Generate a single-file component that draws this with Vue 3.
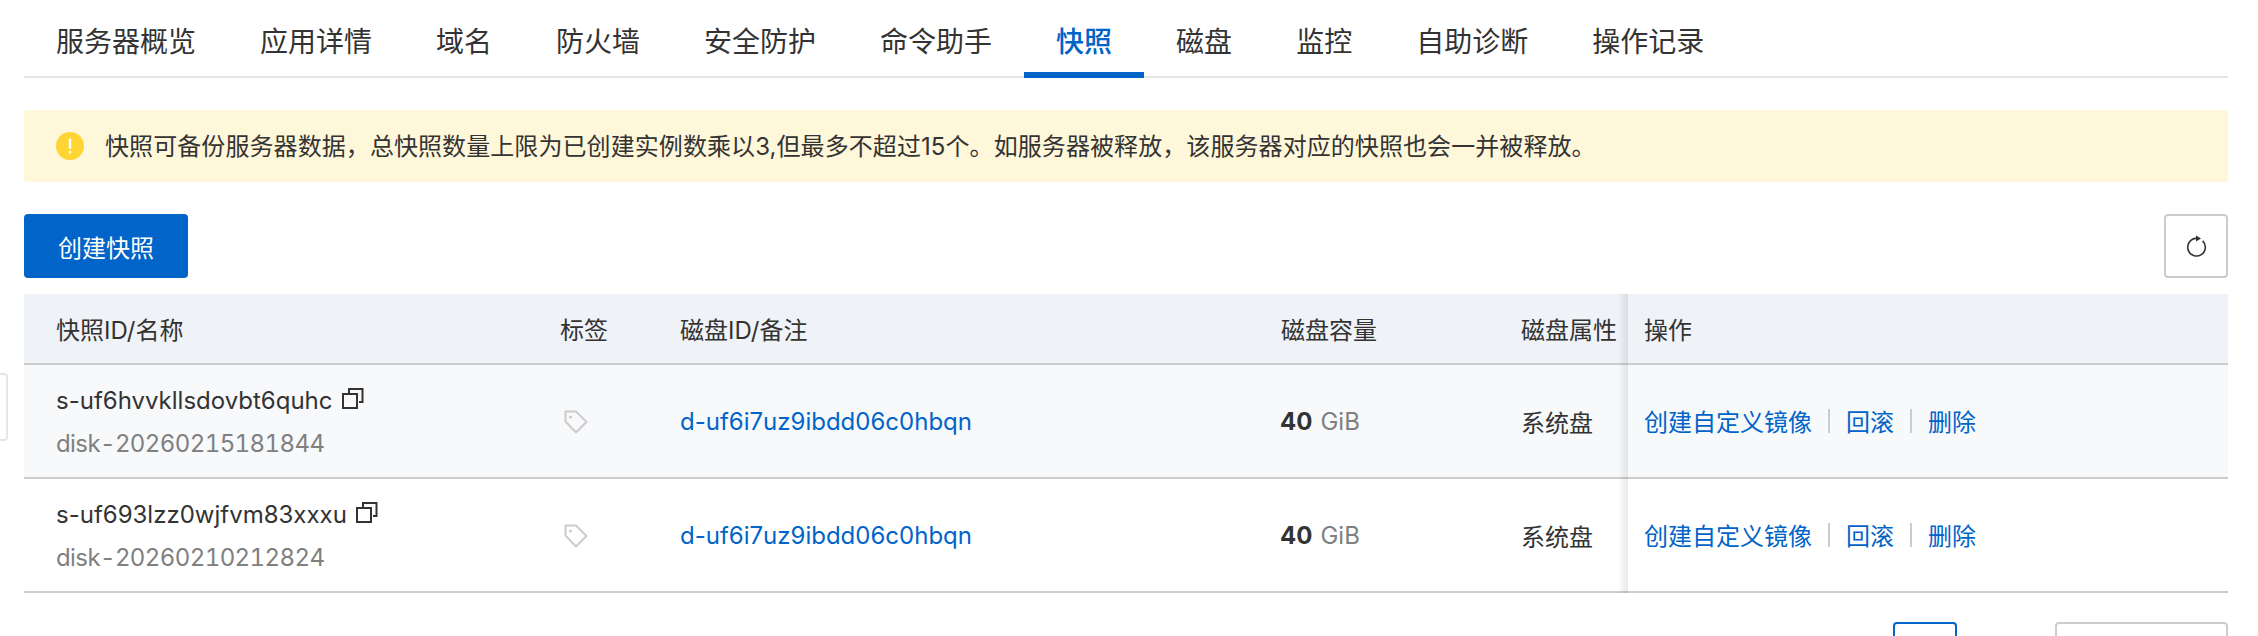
<script setup>
const tabs = ['服务器概览', '应用详情', '域名', '防火墙', '安全防护', '命令助手', '快照', '磁盘', '监控', '自助诊断', '操作记录']
const rows = [
  { id: 's-uf6hvvkllsdovbt6quhc', name: 'disk-20260215181844', hover: true },
  { id: 's-uf693lzz0wjfvm83xxxu', name: 'disk-20260210212824', hover: false },
]
</script>

<template>
  <div class="page">
    <div class="edge-handle"></div>
    <nav class="tabs">
      <a v-for="t in tabs" :key="t" class="tab" :class="{ active: t === '快照' }">{{ t }}</a>
    </nav>

    <div class="alert">
      <svg class="alert-icon" viewBox="0 0 28 28" width="28" height="28">
        <circle cx="14" cy="14" r="14" fill="#ffd534" />
        <rect x="12.8" y="6.5" width="2.4" height="10.5" rx="1" fill="#fff" />
        <rect x="12.8" y="19" width="2.4" height="2.6" rx="1" fill="#fff" />
      </svg>
      <span class="alert-text">快照可备份服务器数据，总快照数量上限为已创建实例数乘以3,但最多不超过15个。如服务器被释放，该服务器对应的快照也会一并被释放。</span>
    </div>

    <div class="toolbar">
      <button class="primary">创建快照</button>
      <button class="refresh" aria-label="刷新">
        <svg viewBox="0 0 24 24" width="24" height="24" fill="none">
          <path d="M12 4.4A8.8 8.8 0 1 0 18.6 6.8" stroke="#333" stroke-width="1.6" />
          <path d="M12 1.4L17 4.4L12 7.4Z" fill="#333" />
        </svg>
      </button>
    </div>

    <table class="table">
      <colgroup>
        <col class="c1" /><col class="c2" /><col class="c3" /><col class="c4" /><col class="c5" /><col class="c6" />
      </colgroup>
      <thead>
        <tr>
          <th>快照ID/名称</th>
          <th>标签</th>
          <th>磁盘ID/备注</th>
          <th>磁盘容量</th>
          <th>磁盘属性</th>
          <th class="fixed">操作</th>
        </tr>
      </thead>
      <tbody>
        <tr v-for="r in rows" :key="r.id" :class="{ hover: r.hover }">
          <td>
            <div class="id-line">
              <span>{{ r.id }}</span>
              <svg class="copy" viewBox="0 0 22 22" width="22" height="22" fill="none" stroke="#333" stroke-width="2">
                <rect x="1" y="7" width="14" height="14" />
                <path d="M7 7V2H20.5V15H17" />
              </svg>
            </div>
            <div class="sub">{{ r.name }}</div>
          </td>
          <td>
            <svg class="tag" viewBox="0 0 24 24" width="24" height="24" fill="none">
              <path d="M1.5 1.5H12L22.5 12L12 22.5L1.5 11.5Z" stroke="#ccc" stroke-width="2" stroke-linejoin="round" />
              <circle cx="6.5" cy="7" r="1.5" fill="#ccc" />
            </svg>
          </td>
          <td><a class="link">d-uf6i7uz9ibdd06c0hbqn</a></td>
          <td><b class="num">40</b><span class="unit">GiB</span></td>
          <td>系统盘</td>
          <td class="fixed">
            <div class="actions">
              <a class="link">创建自定义镜像</a>
              <i class="sep"></i>
              <a class="link">回滚</a>
              <i class="sep"></i>
              <a class="link">删除</a>
            </div>
          </td>
        </tr>
      </tbody>
    </table>

    <div class="pager">
      <span class="pg current"></span>
      <span class="pg size"></span>
    </div>
  </div>
</template>

<style>
html, body { margin: 0; background: #fff; overflow: hidden; }
</style>

<style scoped>
.page {
  position: relative;
  box-sizing: border-box;
  width: 2258px;
  height: 636px;
  overflow: hidden;
  padding: 0 30px 0 24px;
  background: #fff;
  color: #333;
  font-family: Inter, "Noto Sans CJK SC", sans-serif;
  font-size: 24px;
}
.edge-handle {
  position: absolute;
  left: -6px;
  top: 373px;
  width: 10px;
  height: 64px;
  border: 2px solid #e5e5e5;
  border-radius: 4px;
}
.tabs {
  display: flex;
  height: 78px;
  box-sizing: border-box;
  border-bottom: 2px solid #e5e5e5;
}
.tab {
  position: relative;
  padding: 0 32px;
  font-size: 28px;
  line-height: 84px;
  height: 76px;
  color: #333;
  white-space: nowrap;
}
.tab.active { color: #0064c8; font-weight: 500; }
.tab.active::after {
  content: "";
  position: absolute;
  left: 0;
  right: 0;
  bottom: -2px;
  height: 6px;
  background: #0064c8;
}
.alert {
  display: flex;
  align-items: center;
  gap: 21px;
  height: 72px;
  margin-top: 32px;
  padding-left: 32px;
  background: #fff7da;
  border-radius: 4px;
}
.alert-icon { flex: none; }
.alert-text { letter-spacing: 0.08px; line-height: 32px; padding-top: 2px; }
.toolbar {
  display: flex;
  justify-content: space-between;
  margin-top: 32px;
  height: 64px;
}
button { font-family: inherit; font-size: 24px; cursor: pointer; }
.primary {
  width: 164px;
  height: 64px;
  border: 0;
  border-radius: 4px;
  background: #0064c8;
  color: #fff;
  padding: 0;
}
.refresh {
  display: flex;
  align-items: center;
  justify-content: center;
  box-sizing: border-box;
  width: 64px;
  height: 64px;
  padding: 0;
  background: #fff;
  border: 2px solid #ccc;
  border-radius: 4px;
}
.table {
  width: 2204px;
  margin-top: 16px;
  table-layout: fixed;
  border-collapse: separate;
  border-spacing: 0;
}
.c1 { width: 504px; }
.c2 { width: 120px; }
.c3 { width: 601px; }
.c4 { width: 240px; }
.c5 { width: 139px; }
.c6 { width: 600px; }
th, td {
  box-sizing: border-box;
  padding: 0 0 0 32px;
  text-align: left;
  border-bottom: 2px solid #ccc;
  white-space: nowrap;
}
th {
  height: 71px;
  background: #eff2f6;
  font-weight: 400;
  font-size: 24px;
}
td { height: 114px; }
tr.hover td { background: #f8f9fb; }
td.fixed, th.fixed {
  position: relative;
  padding-left: 16px;
}
.fixed::before {
  content: "";
  position: absolute;
  left: -10px;
  top: 0;
  bottom: -2px;
  width: 10px;
  background: linear-gradient(to right, rgba(0, 0, 0, 0), rgba(0, 0, 0, 0.09));
}
.id-line { display: flex; align-items: center; height: 32px; gap: 9px; margin-top: 2px; }
.copy { position: relative; top: -2px; }
.sub {
  margin-top: 12px;
  line-height: 32px;
  color: #808080;
  font-variant-numeric: tabular-nums;
  letter-spacing: -0.6px;
}
.tag { display: block; margin: 2px 0 0 4px; }
.link { color: #0064c8; }
.num { font-weight: 700; margin-left: -1px; }
.unit { color: #808080; margin-left: 8px; }
.actions { display: flex; align-items: center; }
.actions .link { padding-bottom: 2px; }
.sep {
  width: 2px;
  height: 24px;
  margin: 0 16px;
  background: #ccc;
}
.pager {
  position: relative;
  display: flex;
  justify-content: flex-end;
  gap: 98px;
  margin-top: 29px;
}
.pg {
  box-sizing: border-box;
  height: 64px;
  border-radius: 4px;
  background: #fff;
}
.current { width: 64px; border: 2px solid #0064c8; }
.size { width: 173px; border: 2px solid #ccc; }
</style>
